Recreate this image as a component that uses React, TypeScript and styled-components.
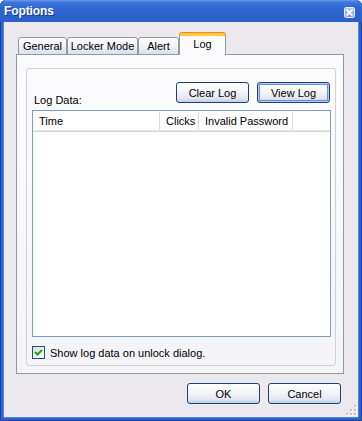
import React from "react";
import styled, { createGlobalStyle } from "styled-components";

const GlobalStyle = createGlobalStyle`
  html, body {
    margin: 0;
    padding: 0;
  }
  body {
    font-family: "Liberation Sans", Arial, sans-serif;
    font-size: 11px;
    color: #000;
  }
`;

const Window = styled.div`
  width: 362px;
  height: 421px;
  box-sizing: border-box;
  display: flex;
  flex-direction: column;
  background: #2c60cb;
  border-radius: 6px 6px 0 0;
  box-shadow: inset 1px 0 0 #1a43a8, inset -1px 0 0 #1a43a8, inset 0 -1px 0 #1a43a8;
  overflow: hidden;
`;

const TitleBar = styled.div`
  height: 22px;
  flex: none;
  display: flex;
  align-items: center;
  padding: 0 7px 0 4px;
  background: linear-gradient(#6f9be9 0px, #3f78de 2px, #2f66d0 8px, #2b5fc8 100%);
`;

const Title = styled.div`
  flex: 1;
  color: #fff;
  font-weight: bold;
  font-size: 12px;
  letter-spacing: -0.1px;
  text-shadow: 1px 1px 0 #163c92;
`;

const CloseButton = styled.div`
  width: 11px;
  height: 11px;
  margin-top: 2px;
  box-sizing: border-box;
  border: 1px solid #e6eeff;
  border-radius: 2px;
  background: linear-gradient(#b4c9f1, #7d9fe2);
  display: flex;
  align-items: center;
  justify-content: center;
`;

const Client = styled.div`
  position: relative;
  flex: 1;
  margin: 0 4px 4px;
  background: #ebe9ed;
  padding: 12px 14px 0 12px;
  box-shadow: -1px 0 0 #5585e2, 1px 0 0 #5585e2, 0 1px 0 #5585e2;
`;

const TabStrip = styled.div`
  position: relative;
  z-index: 1;
  display: flex;
  align-items: flex-end;
  height: 21px;
  margin: 0 0 -1px 2px;
`;

const Tab = styled.div<{ $w: number; $active?: boolean }>`
  width: ${(p) => p.$w}px;
  box-sizing: border-box;
  height: ${(p) => (p.$active ? 22 : 18)}px;
  display: flex;
  align-items: center;
  justify-content: center;
  border: 1px solid #919b9c;
  border-bottom: ${(p) => (p.$active ? "none" : "1px solid #919b9c")};
  border-top: ${(p) => (p.$active ? "3px solid #ffc73c" : "1px solid #919b9c")};
  border-radius: 3px 3px 0 0;
  background: ${(p) =>
    p.$active ? "#fcfcfe" : "linear-gradient(#ffffff, #f1f3f8 50%, #d9e1ee)"};
  padding-bottom: ${(p) => (p.$active ? 3 : 0)}px;
  box-shadow: ${(p) => (p.$active ? "0 -1px 0 #e68b2c" : "none")};
`;

const Panel = styled.div`
  width: 328px;
  height: 320px;
  box-sizing: border-box;
  border: 1px solid #919b9c;
  background: linear-gradient(#fcfcfe, #f4f3f8);
  padding: 13px 7px 7px 9px;
`;

const GroupBox = styled.div`
  border: 1px solid #d3d1c9;
  border-radius: 3px;
  padding: 13px 4px 6px 5px;
  display: flex;
  flex-direction: column;
`;

const ActionRow = styled.div`
  height: 21px;
  display: flex;
  align-items: flex-end;
  justify-content: space-between;
  margin-right: 1px;
`;

const Label = styled.div`
  line-height: 13px;
  margin: 0 0 -4px 2px;
`;

const ButtonGroup = styled.div`
  display: flex;
  gap: 8px;
`;

const Button = styled.button<{ $default?: boolean }>`
  width: 73px;
  height: 21px;
  box-sizing: border-box;
  padding: 0;
  border: 1px solid #1f3e7d;
  border-radius: 3px;
  font-family: inherit;
  font-size: 11px;
  color: #000;
  background: linear-gradient(#ffffff 0%, #f4f5f9 45%, #e3e7f0 80%, #c3cee3 100%);
  box-shadow: ${(p) =>
    p.$default
      ? "inset 0 0 0 1px #b6cbf2, inset 0 0 0 2px #6b8fdf"
      : "inset 0 1px 0 #ffffff"};
`;

const ListBox = styled.div`
  margin-top: 7px;
  height: 227px;
  box-sizing: border-box;
  border: 1px solid #7f9db9;
  background: #fff;
`;

const Header = styled.div`
  display: flex;
  height: 21px;
  box-sizing: border-box;
  padding-bottom: 2px;
  box-shadow: inset 0 -1px 0 #d8d6ce, inset 0 -2px 0 #e6e4dc;
`;

const HeaderCell = styled.div<{ $w: number }>`
  width: ${(p) => p.$w}px;
  box-sizing: border-box;
  display: flex;
  align-items: center;
  padding-left: 6px;
  border-right: 1px solid #dcdad3;
  margin-top: 1px;
`;

const CheckRow = styled.label`
  display: flex;
  align-items: center;
  gap: 5px;
  margin-top: 9px;
  height: 13px;
`;

const CheckBox = styled.div`
  width: 13px;
  height: 13px;
  box-sizing: border-box;
  border: 1px solid #1c5180;
  background: linear-gradient(135deg, #dcdcd7, #ffffff);
  display: flex;
  align-items: center;
  justify-content: center;
`;

const Footer = styled.div`
  display: flex;
  justify-content: flex-end;
  gap: 8px;
  margin: 9px 3px 0 0;
`;

const SizeGrip = styled.svg`
  position: absolute;
  right: 1px;
  bottom: 1px;
`;

export default function App() {
  return (
    <>
      <GlobalStyle />
      <Window>
        <TitleBar>
          <Title>Foptions</Title>
          <CloseButton>
            <svg width="7" height="7" viewBox="0 0 7 7">
              <path d="M0.5 0.5 L6.5 6.5 M6.5 0.5 L0.5 6.5" stroke="#fff" strokeWidth="1.8" />
            </svg>
          </CloseButton>
        </TitleBar>
        <Client>
          <TabStrip>
            <Tab $w={49}>General</Tab>
            <Tab $w={71}>Locker Mode</Tab>
            <Tab $w={41}>Alert</Tab>
            <Tab $w={47} $active>
              Log
            </Tab>
          </TabStrip>
          <Panel>
            <GroupBox>
              <ActionRow>
                <Label>Log Data:</Label>
                <ButtonGroup>
                  <Button>Clear Log</Button>
                  <Button $default>View Log</Button>
                </ButtonGroup>
              </ActionRow>
              <ListBox>
                <Header>
                  <HeaderCell $w={127}>Time</HeaderCell>
                  <HeaderCell $w={39}>Clicks</HeaderCell>
                  <HeaderCell $w={94}>Invalid Password</HeaderCell>
                </Header>
              </ListBox>
              <CheckRow>
                <CheckBox>
                  <svg width="9" height="9" viewBox="0 0 9 9">
                    <path d="M1 4 L3.5 6.5 L8 2" fill="none" stroke="#21a121" strokeWidth="2" />
                  </svg>
                </CheckBox>
                Show log data on unlock dialog.
              </CheckRow>
            </GroupBox>
          </Panel>
          <Footer>
            <Button>OK</Button>
            <Button>Cancel</Button>
          </Footer>
          <SizeGrip width="11" height="11" viewBox="0 0 11 11">
            {[
              [8, 0],
              [8, 4],
              [4, 4],
              [8, 8],
              [4, 8],
              [0, 8],
            ].map(([x, y]) => (
              <g key={`${x}-${y}`}>
                <rect x={x + 1} y={y + 1} width="2" height="2" fill="#ffffff" />
                <rect x={x} y={y} width="2" height="2" fill="#c6c4bd" />
              </g>
            ))}
          </SizeGrip>
        </Client>
      </Window>
    </>
  );
}
